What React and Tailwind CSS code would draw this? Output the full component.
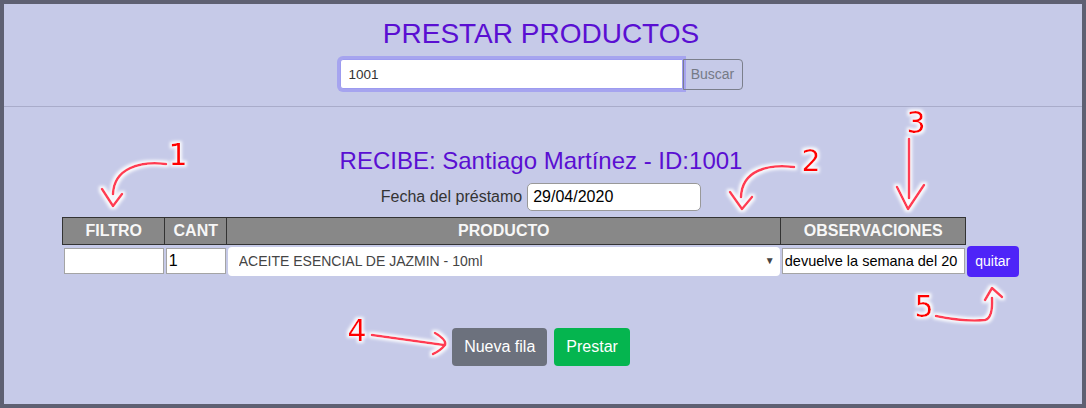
import React, { useState } from 'react';

// anotaciones rojas dibujadas encima de la captura
const Annotations = () => (
  <svg
    className="absolute inset-0 pointer-events-none"
    width="1086"
    height="408"
    viewBox="0 0 1086 408"
  >
    <defs>
      <filter id="glow" x="-50%" y="-50%" width="200%" height="200%">
        <feMorphology in="SourceAlpha" operator="dilate" radius="1.5" result="d" />
        <feGaussianBlur in="d" stdDeviation="1.8" result="b" />
        <feFlood floodColor="#ffffff" floodOpacity="0.9" />
        <feComposite in2="b" operator="in" result="w" />
        <feMerge>
          <feMergeNode in="w" />
          <feMergeNode in="SourceGraphic" />
        </feMerge>
      </filter>
    </defs>
    <g
      fill="none"
      stroke="#ff3b52"
      strokeWidth="2.6"
      strokeLinecap="round"
      strokeLinejoin="round"
      filter="url(#glow)"
    >
      {/* 1 */}
      <path d="M166 164 C140 161 114 168 113 194" />
      <path d="M102 189 L113 206 L122 194" />
      {/* 2 */}
      <path d="M794 167 C768 164 742 170 741 197" />
      <path d="M730 192 L742 209 L752 197" />
      {/* 3 */}
      <path d="M909 139 L909 198" />
      <path d="M897 187 L908 209 L924 185" />
      {/* 4 */}
      <path d="M372 335 L444 345" />
      <path d="M435 333 Q447 340 445 345 Q440 351 433 354" />
      {/* 5 */}
      <path d="M936 316 Q965 322 985 320 Q993 318 992 298" />
      <path d="M985 300 L992 288 L1002 297" />
    </g>
    <g
      fill="#ff0000"
      fontFamily="'DejaVu Sans', sans-serif"
      fontSize="30"
      textAnchor="middle"
      filter="url(#glow)"
    >
      <text x="178" y="165">1</text>
      <text x="811" y="171">2</text>
      <text x="916" y="133">3</text>
      <text x="357" y="341">4</text>
      <text x="924" y="317">5</text>
    </g>
  </svg>
);

const App = () => {
  const [busqueda, setBusqueda] = useState('1001');
  const [fecha, setFecha] = useState('29/04/2020');
  const [filas, setFilas] = useState([
    {
      filtro: '',
      cant: '1',
      producto: 'ACEITE ESENCIAL DE JAZMIN - 10ml',
      obs: 'devuelve la semana del 20',
    },
  ]);

  const update = (i, key, val) =>
    setFilas((fs) => fs.map((f, j) => (j === i ? { ...f, [key]: val } : f)));

  const thBase =
    'h-[27px] p-0 border border-[#333] bg-[#888] text-[#f7f7f7] text-[16px] font-bold text-center align-middle';

  return (
    <div className="relative w-[1086px] h-[408px] bg-[#5e6072] p-1 font-['Liberation_Sans',Arial,sans-serif]">
      <div className="h-full bg-[#c6cae8]">
        {/* Buscador */}
        <div className="pt-[13px] pb-4 pr-1 border-b border-[#a9acca] flex flex-col items-center">
          <h1 className="text-[28px] leading-[34px] text-[#5a0fd2]">PRESTAR PRODUCTOS</h1>
          <div className="mt-2 flex">
            <input
              value={busqueda}
              onChange={(e) => setBusqueda(e.target.value)}
              className="w-[343px] h-[30px] px-2 bg-white text-[13.5px] text-[#333] border border-[#9d9bf0] rounded-l-[3px] ring-[3px] ring-[#a6a4ef] outline-none"
            />
            <button className="w-[60px] h-[31px] border border-[#7b7f8c] rounded-r-[4px] text-[14px] text-[#757a86]">
              Buscar
            </button>
          </div>
        </div>

        {/* Prestamo */}
        <div className="pt-[40px] pr-1 flex flex-col items-center">
          <h2 className="text-[24px] leading-[28px] text-[#5a0fd2]">
            RECIBE: Santiago Martínez - ID:1001
          </h2>
          <div className="mt-2 flex items-center gap-[5px]">
            <span className="text-[16px] text-[#333]">Fecha del préstamo</span>
            <input
              value={fecha}
              onChange={(e) => setFecha(e.target.value)}
              className="w-[174px] h-[28px] px-[5px] bg-white text-[16px] text-black border border-[#999] rounded-[5px] outline-none"
            />
          </div>

          <table className="mt-[6px] w-[957px] table-fixed border-collapse">
            <colgroup>
              <col className="w-[102px]" />
              <col className="w-[62px]" />
              <col className="w-[554px]" />
              <col className="w-[185px]" />
              <col className="w-[54px]" />
            </colgroup>
            <thead>
              <tr>
                <th className={thBase}>FILTRO</th>
                <th className={thBase}>CANT</th>
                <th className={thBase}>PRODUCTO</th>
                <th className={thBase}>OBSERVACIONES</th>
                <th className="p-0" />
              </tr>
            </thead>
            <tbody>
              {filas.map((f, i) => (
                <tr key={i} className="h-[33px]">
                  <td className="p-[1px] align-middle">
                    <input
                      value={f.filtro}
                      onChange={(e) => update(i, 'filtro', e.target.value)}
                      className="block w-full h-[26px] px-[2px] bg-white border border-[#a4a4a4] outline-none text-[16px]"
                    />
                  </td>
                  <td className="p-[1px] align-middle">
                    <input
                      value={f.cant}
                      onChange={(e) => update(i, 'cant', e.target.value)}
                      className="block w-full h-[26px] px-[2px] bg-white border border-[#a4a4a4] outline-none text-[16px] text-black"
                    />
                  </td>
                  <td className="p-[1px] align-middle">
                    <div className="relative">
                      <select
                        value={f.producto}
                        onChange={(e) => update(i, 'producto', e.target.value)}
                        className="block w-full h-[29px] pl-[11px] pr-6 appearance-none bg-white rounded-[4px] text-[14px] text-[#444] outline-none"
                      >
                        <option>ACEITE ESENCIAL DE JAZMIN - 10ml</option>
                        <option>ACEITE ESENCIAL DE LAVANDA - 10ml</option>
                      </select>
                      <span className="absolute right-[5px] top-[6px] text-[10px] text-[#444] pointer-events-none">
                        ▼
                      </span>
                    </div>
                  </td>
                  <td className="p-[1px] align-middle">
                    <input
                      value={f.obs}
                      onChange={(e) => update(i, 'obs', e.target.value)}
                      className="block w-full h-[26px] px-[2px] bg-white border border-[#a4a4a4] outline-none text-[14.5px] text-black"
                    />
                  </td>
                  <td className="p-[1px] align-middle">
                    <button className="block w-full h-[31px] bg-[#4e24f8] text-white text-[14px] rounded-[4px]">
                      quitar
                    </button>
                  </td>
                </tr>
              ))}
            </tbody>
          </table>

          <div className="mt-[50px] flex gap-[7px]">
            <button
              onClick={() =>
                setFilas((fs) => [...fs, { filtro: '', cant: '1', producto: '', obs: '' }])
              }
              className="px-3 py-[7px] text-[16px] leading-6 text-white bg-[#6c717d] rounded-[4px]"
            >
              Nueva fila
            </button>
            <button className="px-3 py-[7px] text-[16px] leading-6 text-white bg-[#05b54f] rounded-[4px]">
              Prestar
            </button>
          </div>
        </div>
      </div>
      <Annotations />
    </div>
  );
};

export default App;
